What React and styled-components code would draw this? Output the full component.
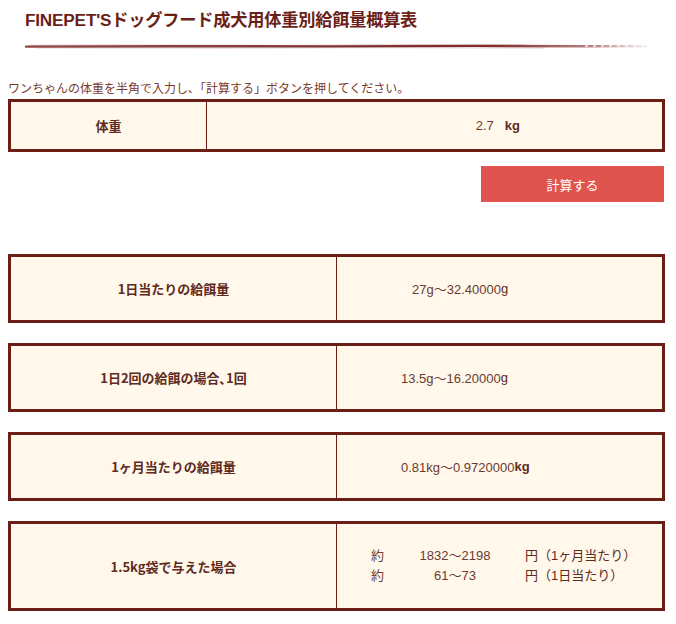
import React from "react";
import styled, { createGlobalStyle } from "styled-components";

const GlobalStyle = createGlobalStyle`
  html, body {
    margin: 0;
    padding: 0;
    background: #ffffff;
  }
  body {
    font-family: "Liberation Sans", "Noto Sans CJK JP", sans-serif;
  }
`;

const Page = styled.div`
  width: 657px;
  margin: 0 11px 0 8px;
  display: flex;
  flex-direction: column;
  padding-bottom: 14px;
`;

const Header = styled.header`
  padding-left: 17px;
  padding-top: 10px;
`;

const Title = styled.h1`
  margin: 0;
  font-size: 17.2px;
  line-height: 20px;
  font-weight: 700;
  color: #6a1f18;
  letter-spacing: -0.2px;
`;

const Brush = styled.svg`
  display: block;
  margin-top: 13px;
  width: 622px;
  height: 7px;
`;

const Lead = styled.p`
  margin: 30px 0 3px;
  font-size: 12px;
  line-height: 16px;
  color: #7a3a2c;
  font-family: "Noto Sans CJK JP", sans-serif;
`;

const Table = styled.div`
  display: grid;
  grid-template-columns: ${(p) => p.$labelWidth}px 1fr;
  height: ${(p) => p.$height}px;
  box-sizing: border-box;
  border: 3px solid #6b1e16;
  background: #fff8eb;
`;

const Label = styled.div`
  display: flex;
  align-items: center;
  justify-content: center;
  border-right: 1px solid #6b1e16;
  font-size: 13px;
  font-weight: 700;
  color: #5e2a21;
  font-family: "Noto Sans CJK JP", sans-serif;
`;

const Value = styled.div`
  display: flex;
  align-items: center;
  justify-content: ${(p) => (p.$right ? "flex-end" : "flex-start")};
  padding-left: ${(p) => p.$pad || 0}px;
  padding-right: ${(p) => p.$padRight || 0}px;
  font-size: 13px;
  color: #6b3a30;
  font-family: "Liberation Sans", "Noto Sans CJK JP", sans-serif;
`;

const Unit = styled.span`
  margin-left: ${(p) => p.$gap}px;
  font-weight: ${(p) => (p.$bold ? 700 : 400)};
  color: #5e2a21;
`;

const Button = styled.button`
  align-self: flex-end;
  margin: 14px 1px 0 0;
  width: 183px;
  height: 36px;
  border: none;
  background: #e05450;
  color: #ffffff;
  font-size: 13px;
  font-family: "Noto Sans CJK JP", sans-serif;
  cursor: pointer;
`;

const Results = styled.div`
  display: flex;
  flex-direction: column;
  gap: 20px;
  margin-top: 52px;
`;

const Price = styled.div`
  display: grid;
  grid-template-columns: 44px 80px auto;
  row-gap: 6px;
  padding-left: 34px;
  align-content: center;
  font-family: "Liberation Sans", "Noto Sans CJK JP", sans-serif;
  font-size: 13px;
  color: #6b3a30;
  line-height: 14px;
`;

const Num = styled.span`
  text-align: center;
`;

const Yen = styled.span`
  padding-left: 30px;
  color: #5e2a21;
`;

const rows = [
  { label: "1日当たりの給餌量", num: "27g～32.40000", unit: "g", pad: 75 },
  { label: "1日2回の給餌の場合､1回", num: "13.5g～16.20000", unit: "g", pad: 64 },
  { label: "1ヶ月当たりの給餌量", num: "0.81kg～0.9720000", unit: "kg", pad: 64, bold: true },
];

export default function App() {
  return (
    <>
      <GlobalStyle />
      <Page>
        <Header>
          <Title>FINEPET'Sドッグフード成犬用体重別給餌量概算表</Title>
          <Brush viewBox="0 0 622 7" preserveAspectRatio="none">
            <defs>
              <linearGradient id="fade" x1="0" x2="1" y1="0" y2="0">
                <stop offset="0" stopColor="#7b2a26" stopOpacity="0.85" />
                <stop offset="0.75" stopColor="#7b2a26" stopOpacity="1" />
                <stop offset="0.92" stopColor="#8a3a36" stopOpacity="0.6" />
                <stop offset="1" stopColor="#b07070" stopOpacity="0.15" />
              </linearGradient>
            </defs>
            <path d="M0 3.6 L150 3.2 L300 3.4 L450 2.9 L560 3.3 L622 3.1" stroke="url(#fade)" strokeWidth="2.4" fill="none" />
            <path d="M4 2.3 L120 2.1 L260 2.4 L380 1.9 L500 2.2" stroke="#9a4a46" strokeOpacity="0.45" strokeWidth="0.9" fill="none" />
            <path d="M10 4.9 L200 5.1 L340 4.7 L520 5.0" stroke="#9a4a46" strokeOpacity="0.35" strokeWidth="0.8" fill="none" />
            <path d="M560 3 L622 3" stroke="#ffffff" strokeWidth="2.6" strokeDasharray="3 5" strokeOpacity="0.6" fill="none" />
          </Brush>
        </Header>

        <Lead>ワンちゃんの体重を半角で入力し､「計算する」ボタンを押してください。</Lead>

        <Table $labelWidth={196} $height={53}>
          <Label>体重</Label>
          <Value $right $padRight={142}>
            2.7<Unit $gap={11} $bold>kg</Unit>
          </Value>
        </Table>

        <Button>計算する</Button>

        <Results>
          {rows.map((r) => (
            <Table key={r.label} $labelWidth={326} $height={69}>
              <Label>{r.label}</Label>
              <Value $pad={r.pad}>
                {r.num}
                <Unit $gap={0} $bold={r.bold}>{r.unit}</Unit>
              </Value>
            </Table>
          ))}
          <Table $labelWidth={326} $height={90}>
            <Label>1.5kg袋で与えた場合</Label>
            <Price>
              <span>約</span>
              <Num>1832～2198</Num>
              <Yen>円（1ヶ月当たり）</Yen>
              <span>約</span>
              <Num>61～73</Num>
              <Yen>円（1日当たり）</Yen>
            </Price>
          </Table>
        </Results>
      </Page>
    </>
  );
}
